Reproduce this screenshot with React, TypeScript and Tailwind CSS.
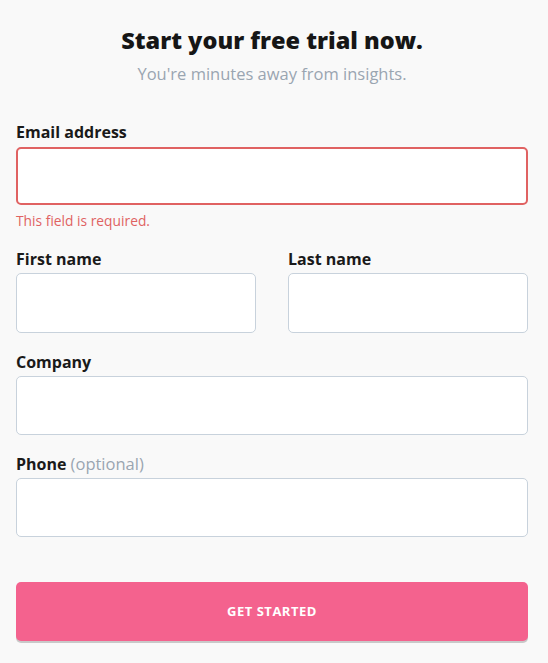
export default function App() {
  const font = { fontFamily: "'Open Sans', 'Noto Sans', sans-serif" };
  return (
    <div className="min-h-[663px] w-[548px] bg-[#f9f9f9] pl-4" style={font}>
      <div className="w-[512px]">
        <div className="pt-[24px] text-center">
          <h1 className="text-[23.5px] font-extrabold leading-[32px] text-[#161616]">Start your free trial now.</h1>
          <p className="mt-[8px] text-[16.5px] leading-[20px] text-[#9aa5b1]">You're minutes away from insights.</p>
        </div>
        <div className="mt-[38px]">
          <label className="block text-[16px] font-bold leading-[20px] text-[#1a1a1a]">Email address</label>
          <div className="mt-[5px] h-[58px] rounded-[5px] border-2 border-[#e06262] bg-white"></div>
          <p className="mt-[8px] text-[13.8px] leading-[16px] text-[#e06262]">This field is required.</p>
        </div>
        <div className="mt-[20px] grid grid-cols-2 gap-x-[32px]">
          <div>
            <label className="block text-[16px] font-bold leading-[20px] text-[#1a1a1a]">First name</label>
            <div className="mt-[4px] h-[60px] rounded-[5px] border border-[#c8d2dc] bg-white"></div>
          </div>
          <div>
            <label className="block text-[16px] font-bold leading-[20px] text-[#1a1a1a]">Last name</label>
            <div className="mt-[4px] h-[60px] rounded-[5px] border border-[#c8d2dc] bg-white"></div>
          </div>
        </div>
        <div className="mt-[19px]">
          <label className="block text-[16px] font-bold leading-[20px] text-[#1a1a1a]">Company</label>
          <div className="mt-[4px] h-[59px] rounded-[5px] border border-[#c8d2dc] bg-white"></div>
        </div>
        <div className="mt-[19px]">
          <label className="block text-[16px] font-bold leading-[20px] text-[#1a1a1a]">
            Phone <span className="text-[16.5px] font-normal text-[#9aa5b1]">(optional)</span>
          </label>
          <div className="mt-[4px] h-[59px] rounded-[5px] border border-[#c8d2dc] bg-white"></div>
        </div>
        <button className="mt-[45px] flex h-[59px] w-full items-center justify-center rounded-[5px] bg-[#f4628e] text-[13px] font-bold uppercase tracking-[0.5px] text-white shadow-[0_2px_0_#c9c9c9]">
          Get started
        </button>
      </div>
    </div>
  );
}
